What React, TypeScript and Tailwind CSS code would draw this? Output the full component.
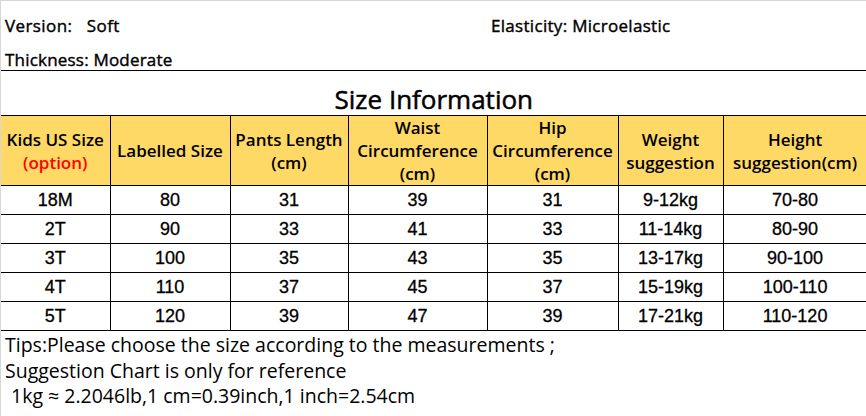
const rows = [
  ['18M', '80', '31', '39', '31', '9-12kg', '70-80'],
  ['2T', '90', '33', '41', '33', '11-14kg', '80-90'],
  ['3T', '100', '35', '43', '35', '13-17kg', '90-100'],
  ['4T', '110', '37', '45', '37', '15-19kg', '100-110'],
  ['5T', '120', '39', '47', '39', '17-21kg', '110-120'],
];

const widths = [109, 120, 118, 139, 131, 105, 144];

const sans = "font-['Open_Sans',sans-serif]";
const arial = "font-['Liberation_Sans',Arial,sans-serif]";

export default function App() {
  return (
    <div className={`w-[866px] h-[416px] bg-white text-black border-t border-l border-[#d6d6d6] overflow-hidden ${sans}`}>
      {/* product attributes */}
      <div className="h-[69px] flex flex-col">
        <div className="flex items-center h-[36px] pt-[14px] text-[17px] [-webkit-text-stroke:0.4px_black]">
          <span className="w-[490px] pl-[4px] whitespace-pre tracking-[0.4px]">Version:   Soft</span>
          <span className="tracking-[0.3px]">Elasticity: Microelastic</span>
        </div>
        <div className="flex items-center h-[32px] pl-[4px] pt-[13px] text-[17px] tracking-[0.2px] [-webkit-text-stroke:0.4px_black]">
          Thickness: Moderate
        </div>
      </div>

      <table className="table-fixed border-collapse w-[865px]">
        <colgroup>
          {widths.map((w, i) => (
            <col key={i} style={{ width: w }} />
          ))}
        </colgroup>
        <tbody>
          <tr className="h-[45px]">
            <td colSpan={7} className="border-t border-r border-black text-center align-bottom pb-[1px] text-[26px] leading-[30px] [-webkit-text-stroke:0.5px_black]">
              Size Information
            </td>
          </tr>

          <tr className="h-[69px] bg-[#ffd966] text-[17px] font-semibold leading-[23px]">
            <th className="border border-black border-l-0 font-semibold p-0">
              Kids US Size
              <br />
              <span className="text-[#ff0000]">(option)</span>
            </th>
            <th className="border border-black font-semibold p-0">Labelled Size</th>
            <th className="border border-black font-semibold p-0">
              Pants Length
              <br />
              (cm)
            </th>
            <th className="border border-black font-semibold p-0">
              Waist
              <br />
              Circumference
              <br />
              (cm)
            </th>
            <th className="border border-black font-semibold p-0">
              Hip
              <br />
              Circumference
              <br />
              (cm)
            </th>
            <th className="border border-black font-semibold p-0">
              Weight
              <br />
              suggestion
            </th>
            <th className="border border-black font-semibold p-0">
              Height
              <br />
              suggestion(cm)
            </th>
          </tr>

          {rows.map((r) => (
            <tr key={r[0]} className={`h-[29px] text-[18px] leading-[20px] [-webkit-text-stroke:0.3px_black] ${arial}`}>
              {r.map((c, i) => (
                <td key={i} className={`border border-black text-center p-0 ${i === 0 ? 'border-l-0' : ''}`}>
                  {c}
                </td>
              ))}
            </tr>
          ))}

          <tr className="h-[86px]">
            <td colSpan={7} className="border-r border-b border-black align-top pt-[1px] pl-[4px] text-[19.5px] leading-[25.5px]">
              <div>Tips:Please choose the size according to the measurements ;</div>
              <div>Suggestion Chart is only for reference</div>
              <div className="pl-[6px]">1kg ≈ 2.2046lb,1 cm=0.39inch,1 inch=2.54cm</div>
            </td>
          </tr>
        </tbody>
      </table>
    </div>
  );
}
